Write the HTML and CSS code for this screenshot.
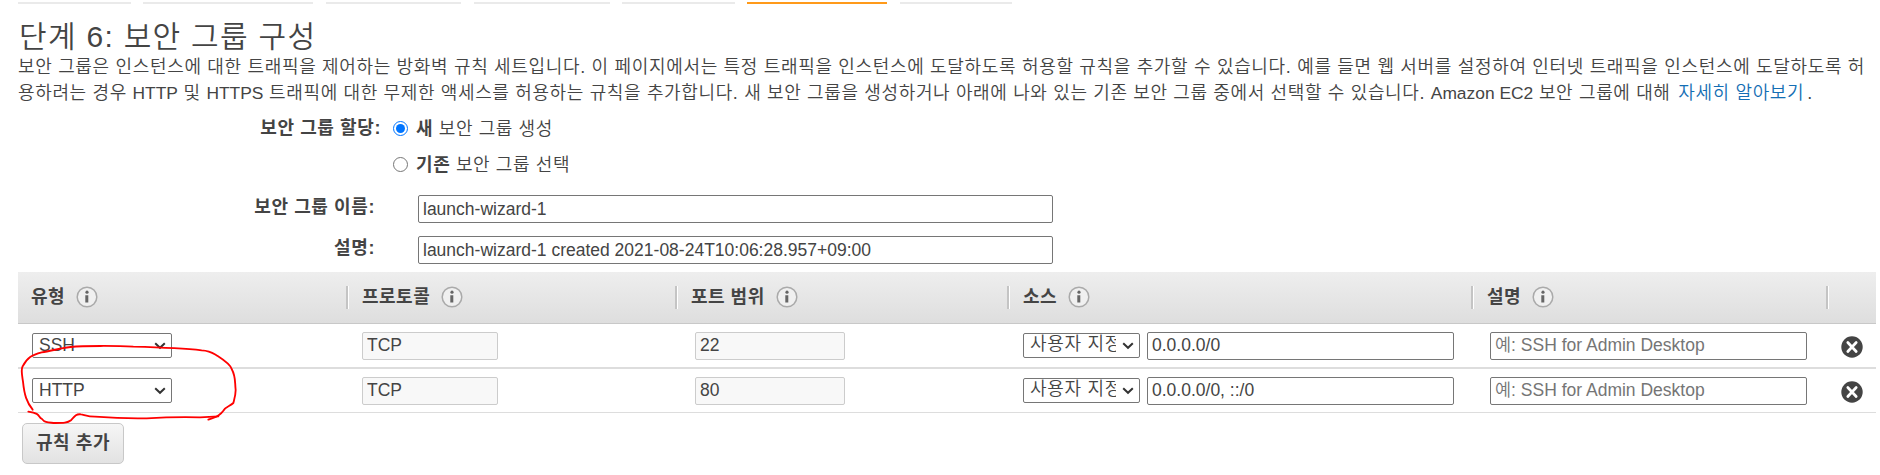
FILE: index.html
```html
<!DOCTYPE html>
<html lang="ko">
<head>
<meta charset="utf-8">
<title>단계 6: 보안 그룹 구성</title>
<link rel="stylesheet" href="styles.css">
</head>
<body>
<svg class="defs" width="0" height="0">
  <symbol id="info" viewBox="0 0 22 22"><circle cx="11" cy="11" r="9.8" fill="#f0f0f0" stroke="#aaa" stroke-width="1.5"/><path d="M9.2 9.2h3.1v7.3h-3V9.2z" fill="#666"/><circle cx="11" cy="6.2" r="1.6" fill="#666"/></symbol>
  <symbol id="remove" viewBox="0 0 22 22"><circle cx="11" cy="11" r="10.7" fill="#444"/><path d="M6.8 6.5l8.4 9M15.2 6.5l-8.4 9" stroke="#fff" stroke-width="2.7" stroke-linecap="round"/></symbol>
  <symbol id="chevron" viewBox="0 0 12 8"><path d="M1.2 1.3L6 5.8l4.8-4.5" fill="none" stroke="#333" stroke-width="2"/></symbol>
</svg>
<nav class="steps"><i class="s1"></i><i class="s2"></i><i class="s3"></i><i class="s4"></i><i class="s5"></i><i class="s6 active"></i><i class="s7"></i></nav>
<main>
  <h1>단계 6: 보안 그룹 구성</h1>
  <p class="intro"><span class="line first">보안 그룹은 인스턴스에 대한 트래픽을 제어하는 방화벽 규칙 세트입니다. 이 페이지에서는 특정 트래픽을 인스턴스에 도달하도록 허용할 규칙을 추가할 수 있습니다. 예를 들면 웹 서버를 설정하여 인터넷 트래픽을 인스턴스에 도달하도록 허</span><span class="line second">용하려는 경우 <span class="latin">HTTP</span> 및 <span class="latin">HTTPS</span> 트래픽에 대한 무제한 액세스를 허용하는 규칙을 추가합니다. 새 보안 그룹을 생성하거나 아래에 나와 있는 기존 보안 그룹 중에서 선택할 수 있습니다. <span class="latin">Amazon EC2</span> 보안 그룹에 대해 <a>자세히 알아보기</a>.</span></p>
  <form>
    <div class="assign">
      <b class="label">보안 그룹 할당:</b>
      <div class="options">
        <label><input type="radio" name="g" checked><span><b>새</b> 보안 그룹 생성</span></label>
        <label><input type="radio" name="g"><span><b>기존</b> 보안 그룹 선택</span></label>
      </div>
    </div>
    <div class="field"><b class="label">보안 그룹 이름:</b><input class="box" value="launch-wizard-1"></div>
    <div class="field"><b class="label">설명:</b><input class="box" value="launch-wizard-1 created 2021-08-24T10:06:28.957+09:00"></div>
  </form>
  <section class="rules">
    <div class="row head">
      <div>유형<svg><use href="#info"/></svg></div>
      <div>프로토콜<svg><use href="#info"/></svg></div>
      <div>포트 범위<svg><use href="#info"/></svg></div>
      <div>소스<svg><use href="#info"/></svg></div>
      <div>설명<svg><use href="#info"/></svg></div>
      <div></div>
    </div>
    <div class="row">
      <div><div class="select type"><span>SSH</span><svg><use href="#chevron"/></svg></div></div>
      <div><input class="box proto" value="TCP" disabled></div>
      <div><input class="box port" value="22" disabled></div>
      <div><div class="select src"><span>사용자 지정</span><svg><use href="#chevron"/></svg></div><input class="box cidr" value="0.0.0.0/0"></div>
      <div><input class="box desc" placeholder="예: SSH for Admin Desktop"></div>
      <div><svg class="x"><use href="#remove"/></svg></div>
    </div>
    <div class="row last">
      <div><div class="select type"><span>HTTP</span><svg><use href="#chevron"/></svg></div></div>
      <div><input class="box proto" value="TCP" disabled></div>
      <div><input class="box port" value="80" disabled></div>
      <div><div class="select src"><span>사용자 지정</span><svg><use href="#chevron"/></svg></div><input class="box cidr" value="0.0.0.0/0, ::/0"></div>
      <div><input class="box desc" placeholder="예: SSH for Admin Desktop"></div>
      <div><svg class="x"><use href="#remove"/></svg></div>
    </div>
  </section>
  <button type="button">규칙 추가</button>
</main>
<svg class="ink" viewBox="0 0 900 630"><path d="M98 434C80 412 73 390 69 350C66 330 62 314 68 304C82 278 95 270 125 262C155 258 175 250 212 246C250 242 350 242 400 245C470 247 560 251 605 256C630 257 640 265 648 270C668 283 690 296 695 312C708 335 704 350 707 375C707 390 703 402 700 414C690 424 678 424 670 437C655 458 645 455 625 464"/><path d="M85 440C125 446 112 455 126 462C135 474 145 472 165 474C190 474 203 474 213 466C225 452 230 446 243 448C250 448 262 455 285 455C350 460 390 461 440 460C490 457 560 456 600 457L655 454"/></svg>
</body>
</html>
```
FILE: styles.css
```css
* { box-sizing: border-box; }
body { margin: 0; width: 1880px; height: 475px; overflow: hidden; background: #fff; color: #444; font: 17.5px "Liberation Sans", "Noto Sans CJK KR", sans-serif; position: relative; }
.defs { position: absolute; }
.steps { display: flex; height: 4px; padding: 2px 0 0 18px; }
.steps i { height: 2px; background: #eaeaea; }
.steps .active { background: #ff9a1a; }
.s1 { width: 113px; margin-right: 12px; }
.s2 { width: 170px; margin-right: 13px; }
.s3 { width: 135px; margin-right: 13px; }
.s4 { width: 136px; margin-right: 12px; }
.s5 { width: 113px; margin-right: 12px; }
.s6 { width: 140px; margin-right: 13px; }
.s7 { width: 112px; }
main { padding-left: 18px; }
h1 { margin: 0; padding: 13px 0 0 1px; height: 50px; line-height: 40px; font-size: 30px; font-weight: 350; letter-spacing: 1.3px; white-space: nowrap; }
.intro { margin: 0; height: 52px; font-size: 18px; font-weight: 350; letter-spacing: .67px; }
.second { letter-spacing: .64px; }
.latin { font-size: 17.4px; letter-spacing: 0; }
.line { display: block; height: 26px; line-height: 26px; white-space: nowrap; }
.intro a { color: #146eb4; margin: 0 3px 0 2px; }
form { height: 166px; }
.assign { display: flex; height: 77px; padding-top: 4px; }
.label { width: 363px; text-align: right; line-height: 36px; white-space: nowrap; font-size: 18px; letter-spacing: .6px; }
.options label { display: flex; align-items: center; height: 36px; font-size: 18px; letter-spacing: .6px; font-weight: 350; }
.options label span { margin-top: -2px; }
.options input { width: 15px; height: 15px; margin: 0 8px 0 12px; }
.options b { font-weight: 700; }
.field { display: flex; height: 41px; padding-top: 6px; }
.field .label { width: 357px; line-height: 28px; margin-right: 43px; margin-top: 4px; }
.field .box { width: 635px; margin-top: 6px; }
.box { display: block; height: 28px; border: 1px solid #767676; border-radius: 2px; padding: 0 4px; color: #444; background: #fff; font: inherit; font-weight: 350; }
.box:disabled { background: #f8f8f8; border-color: #ccc; color: #444; }
.box::placeholder { color: #757575; }
.rules { width: 1858px; }
.row { display: grid; grid-template-columns: 328px 329px 332px 464px 355px 50px; height: 45px; border-bottom: 2px solid #ddd; }
.row > div { display: flex; align-items: center; padding-left: 16px; }
.row > div:first-child { padding-left: 14px; }
.row > div:last-child { padding: 2px 0 0 15px; }
.row.last { height: 44px; border-bottom-width: 1px; }
.row.head { height: 52px; border-bottom: 1px solid #c8c8c8; background: linear-gradient(#eee, #dedede); font-size: 18px; letter-spacing: .5px; font-weight: 700; }
.head > div { position: relative; padding-bottom: 5px; }
.head > div:first-child { padding-left: 13px; }
.head > div + div::before { content: ""; position: absolute; left: 0; top: 14px; width: 2px; height: 23px; background: #c4c4c4; border-right: 1px solid #fff; }
.head svg { width: 22px; height: 22px; margin: 4px 0 0 11px; }
.select { display: flex; align-items: center; height: 25px; border: 1px solid #767676; border-radius: 2px; padding: 0 5px 0 6px; font-weight: 350; }
.select span { flex: 1; overflow: hidden; white-space: nowrap; height: 23px; line-height: 22px; }
.select svg { width: 12px; height: 8px; flex: none; }
.type { width: 140px; }
.proto { width: 136px; }
.port { width: 150px; margin-left: 4px; }
.src { width: 117px; margin-right: 7px; }
.src span { font-size: 18px; letter-spacing: .7px; line-height: 20px; margin-right: 6px; }
.cidr { width: 307px; }
.desc { width: 317px; margin-left: 3px; }
.x { width: 22px; height: 22px; }
button { display: block; width: 102px; height: 41px; margin: 10px 0 0 4px; padding: 0 0 6px; border: 1px solid #c8c8c8; border-radius: 5px; background: linear-gradient(#f6f6f6, #e2e2e2); color: #444; font: inherit; font-size: 18px; letter-spacing: .6px; font-weight: 700; }
.ink { position: absolute; left: 0; top: 265px; width: 300px; height: 210px; fill: none; stroke: #f00; stroke-width: 5.5; stroke-linecap: round; }
```
